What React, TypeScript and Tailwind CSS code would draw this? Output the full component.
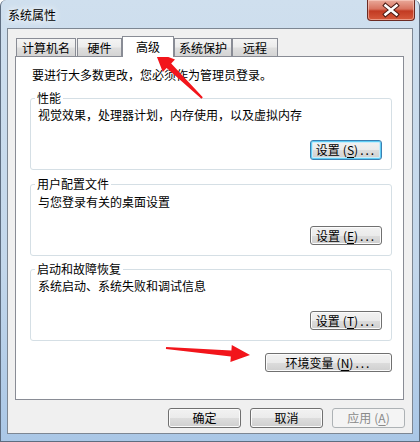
import clsx from 'clsx'
import type { ReactNode } from 'react'

const font = "font-['Noto_Sans_CJK_SC',sans-serif]"

function Btn({ children, className, focus, disabled }: { children: ReactNode; className?: string; focus?: boolean; disabled?: boolean }) {
  return (
    <div
      className={clsx(
        'flex items-center justify-center rounded-[3px] border text-[12px] leading-none',
        disabled
          ? 'border-[#adb2b5] bg-[#f4f4f4] text-[#8a8a8a]'
          : 'bg-[linear-gradient(to_bottom,#f2f2f2_0%,#ebebeb_50%,#dddddd_50%,#cfcfcf_100%)] text-black',
        focus
          ? 'border-[#3c7fb1] shadow-[inset_0_0_0_1px_#5fcdf5,inset_0_0_0_2px_#c9ecfa]'
          : !disabled && 'border-[#707070] shadow-[inset_0_0_0_1px_#fbfbfb]',
        className,
      )}
    >
      {children}
    </div>
  )
}

function Key({ k, dots }: { k: string; dots?: boolean }) {
  return (
    <>
      <span className="ml-[3px]">
        (<span className="underline underline-offset-2">{k}</span>)
      </span>
      {dots && <span className="ml-[2px] tracking-[2px]">...</span>}
    </>
  )
}

function GroupBox({ title, text, btn, pt, gap }: { title: string; text: string; btn: ReactNode; pt: string; gap: string }) {
  return (
    <div className="relative h-[72px] rounded-[3px] border border-[#d5dfe5] shadow-[inset_0_0_0_1px_#ffffff]">
      <span className="absolute -top-[8px] left-[4px] bg-white px-[2px] text-[12px] leading-[14px]">{title}</span>
      <div className={clsx('flex flex-col pl-[7px] pr-[9px]', pt)}>
        <span className="text-[12px] leading-[14px]">{text}</span>
        <div className={clsx('self-end', gap)}>{btn}</div>
      </div>
    </div>
  )
}

function Tab({ label, w, selected, ml }: { label: string; w: string; selected?: boolean; ml?: string }) {
  return (
    <div
      className={clsx(
        'flex justify-center border-l border-r border-t border-[#898c95] text-[12px] leading-none',
        w,
        ml,
        selected
          ? 'relative z-10 -mb-[1px] h-[21px] bg-white pt-[4px]'
          : 'h-[18px] bg-[linear-gradient(to_bottom,#f4f4f4_0%,#ececec_45%,#dedede_55%,#d4d4d4_100%)] pt-[3px]',
      )}
    >
      {label}
    </div>
  )
}

export default function App() {
  return (
    <div
      className={clsx(
        'relative h-[442px] w-[420px] overflow-hidden rounded-t-[6px] border-b border-l border-r border-[#5e6d80] bg-[linear-gradient(to_bottom,#cfdfee_0%,#c3d7eb_60%,#aac7e6_100%)] text-black',
        font,
      )}
    >
      {/* title bar */}
      <div className="flex h-[28px] justify-between">
        <span className="pl-[7px] pt-[8px] text-[12px] leading-[14px] [text-shadow:0_0_6px_#ffffff,0_0_10px_#ffffff]">
          系统属性
        </span>
        <div className="mr-[4px] h-[21px] w-[48px] rounded-b-[4px] border border-t-0 border-[#6b2a22] bg-[linear-gradient(to_bottom,#e9a99a_0%,#d8735f_45%,#c23a22_55%,#d65a3c_100%)] shadow-[inset_0_0_0_1px_rgba(255,220,210,0.5)]">
          <svg width="46" height="20" viewBox="0 0 46 20">
            <path d="M17.5 5.5 L28.5 14.5 M28.5 5.5 L17.5 14.5" stroke="#4a1a14" strokeWidth="4.6" strokeLinecap="square" />
            <path d="M17.5 5.5 L28.5 14.5 M28.5 5.5 L17.5 14.5" stroke="#ffffff" strokeWidth="2.6" strokeLinecap="square" />
          </svg>
        </div>
      </div>

      {/* client area */}
      <div className="mx-[6px] h-[406px] w-[406px] border border-[#7d8793] bg-[#f0f0f0] pl-[7px] pt-[7px]">
        <div className="flex h-[20px] items-end">
          <Tab label="计算机名" w="w-[60px]" ml="ml-[1px]" />
          <Tab label="硬件" w="w-[45px]" ml="ml-[1px]" />
          <Tab label="高级" w="w-[52px]" selected />
          <Tab label="系统保护" w="w-[58px]" />
          <Tab label="远程" w="w-[46px]" />
        </div>

        <div className="h-[344px] w-[389px] border border-[#898c95] bg-white pl-[14px] pr-[11px] pt-[11px]">
          <div className="ml-[2px] text-[12px] leading-[14px]">要进行大多数更改，您必须作为管理员登录。</div>
          <div className="mt-[16px] flex flex-col">
            <GroupBox
              title="性能"
              text="视觉效果，处理器计划，内存使用，以及虚拟内存"
              pt="pt-[9px]"
              gap="mt-[18px]"
              btn={
                <Btn focus className="h-[20px] w-[72px]">
                  设置<Key k="S" dots />
                </Btn>
              }
            />
            <div className="mt-[14px]">
              <GroupBox
                title="用户配置文件"
                text="与您登录有关的桌面设置"
                pt="pt-[10px]"
                gap="mt-[17px]"
                btn={
                  <Btn className="h-[19px] w-[72px]">
                    设置<Key k="E" dots />
                  </Btn>
                }
              />
            </div>
            <div className="mt-[13px]">
              <GroupBox
                title="启动和故障恢复"
                text="系统启动、系统失败和调试信息"
                pt="pt-[9px]"
                gap="mt-[18px]"
                btn={
                  <Btn className="h-[19px] w-[72px]">
                    设置<Key k="T" dots />
                  </Btn>
                }
              />
            </div>
            <Btn className="mt-[12px] h-[19px] w-[127px] self-end">
              环境变量<Key k="N" dots />
            </Btn>
          </div>
        </div>

        <div className="mt-[8px] flex w-[390px] justify-end gap-[9px]">
          <Btn className="h-[20px] w-[73px]">确定</Btn>
          <Btn className="h-[20px] w-[73px]">取消</Btn>
          <Btn disabled className="h-[20px] w-[73px]">
            应用<Key k="A" />
          </Btn>
        </div>
      </div>

      {/* red annotation arrows */}
      <svg className="pointer-events-none absolute left-0 top-0" width="420" height="442" viewBox="0 0 420 442">
        <polygon
          points="154,52 174,59.5 170.2,63.6 201.8,97.3 200.4,98.8 165.6,68 161.8,72"
          fill="#f2151b"
        />
        <polygon
          points="249,355 230.8,345 230.4,350.4 165.1,347 164.9,349 229.8,356.6 229.4,362"
          fill="#f2151b"
        />
      </svg>
    </div>
  )
}
